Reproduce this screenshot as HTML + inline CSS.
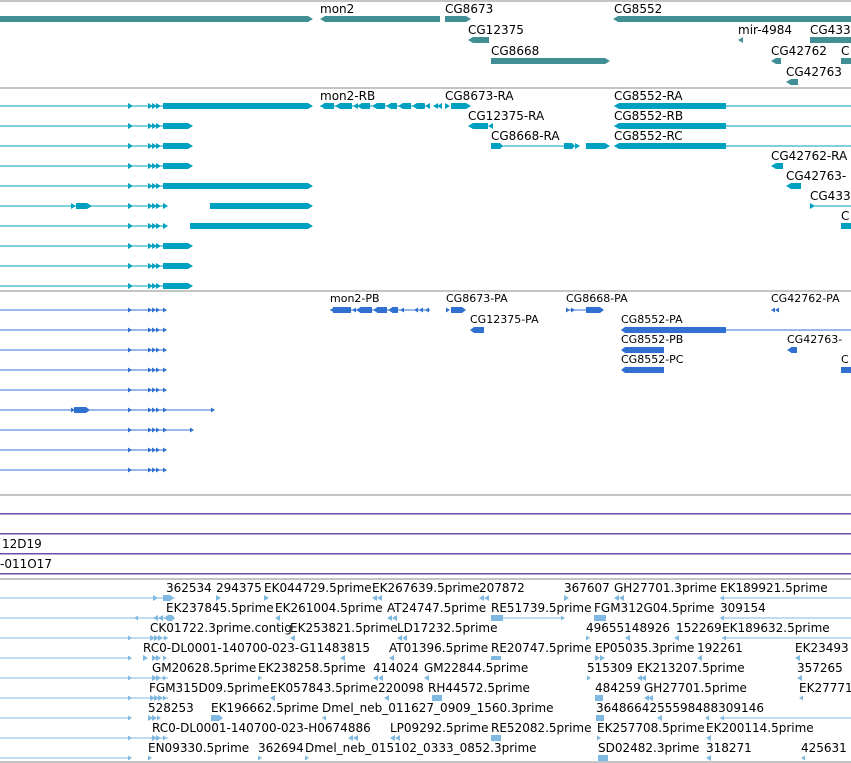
<!DOCTYPE html>
<html><head><meta charset="utf-8"><style>
html,body{margin:0;padding:0;background:#fff;width:851px;height:763px;overflow:hidden}
svg{display:block}
text{font-family:"DejaVu Sans","Liberation Sans",sans-serif;font-size:12px;fill:#000}
.p text{font-size:11px}
</style></head><body>
<svg width="851" height="763" viewBox="0 0 851 763" xmlns="http://www.w3.org/2000/svg">
<defs>
<polygon id="r" points="0,-3 5,0 0,3"/>
<polygon id="l" points="5,-3 0,0 5,3"/>
<polygon id="rs" points="0,-2.5 4,0 0,2.5"/>
<polygon id="ls" points="4,-2.5 0,0 4,2.5"/>
</defs>
<!-- separators -->
<g fill="#c4c4c4">
<rect x="0" y="0" width="851" height="2"/>
<rect x="0" y="87" width="851" height="2"/>
<rect x="0" y="290" width="851" height="2"/>
<rect x="0" y="494" width="851" height="2"/>
<rect x="0" y="578" width="851" height="2"/>
<rect x="0" y="761" width="851" height="2"/>
</g>
<g fill="#6a4fa8">
<rect x="0" y="513" width="851" height="1.5"/>
<rect x="0" y="533" width="851" height="1.5"/>
<rect x="0" y="553" width="851" height="1.5"/>
<rect x="0" y="573" width="851" height="1.5"/>
</g>
<text x="2" y="548">12D19</text>
<text x="0" y="568">-011O17</text>

<!-- genes -->
<g fill="#418f94">
<polygon points="0,16 308,16 313,19 308,22 0,22"/>
<polygon points="320,19 325,16 440,16 440,22 325,22"/>
<polygon points="445,16 466,16 471,19 466,22 445,22"/>
<polygon points="468,40 473,37 489,37 489,43 473,43"/>
<polygon points="491,58 605,58 610,61 605,64 491,64"/>
<polygon points="613,19 618,16 851,16 851,22 618,22"/>
<polygon points="738,40 743,37 743,43"/>
<rect x="810" y="37" width="41" height="6"/>
<polygon points="771,61 776,58 781,58 781,64 776,64"/>
<rect x="841" y="58" width="10" height="6"/>
<polygon points="786,82 791,79 798,79 798,85 791,85"/>
</g>
<text x="320" y="13">mon2</text>
<text x="445" y="13">CG8673</text>
<text x="614" y="13">CG8552</text>
<text x="468" y="34">CG12375</text>
<text x="738" y="34">mir-4984</text>
<text x="810" y="34">CG433</text>
<text x="491" y="55">CG8668</text>
<text x="771" y="55">CG42762</text>
<text x="841" y="55">C</text>
<text x="786" y="76">CG42763</text>

<!-- transcripts -->
<g fill="#00a0c0">
<!-- left rows -->
<g id="tr1"><rect x="0" y="105.5" width="163" height="1"/><use href="#r" x="128" y="106"/><use href="#r" x="148" y="106"/><use href="#r" x="152" y="106"/><use href="#r" x="156" y="106"/></g>
<use href="#tr1" y="20"/><use href="#tr1" y="40"/><use href="#tr1" y="60"/><use href="#tr1" y="80"/><use href="#tr1" y="100"/><use href="#tr1" y="120"/><use href="#tr1" y="140"/><use href="#tr1" y="160"/><use href="#tr1" y="180"/>
<polygon points="163,103 308,103 313,106 308,109 163,109"/>
<polygon points="163,123 188,123 193,126 188,129 163,129"/>
<polygon points="163,143 188,143 193,146 188,149 163,149"/>
<polygon points="163,163 188,163 193,166 188,169 163,169"/>
<polygon points="163,183 308,183 313,186 308,189 163,189"/>
<polygon points="76,203 87,203 92,206 87,209 76,209"/><use href="#r" x="71" y="206"/>
<use href="#r" x="163" y="206"/>
<polygon points="210,203 308,203 313,206 308,209 210,209"/>
<use href="#r" x="163" y="226"/>
<polygon points="190,223 308,223 313,226 308,229 190,229"/>
<polygon points="163,243 188,243 193,246 188,249 163,249"/>
<polygon points="163,263 188,263 193,266 188,269 163,269"/>
<polygon points="163,283 188,283 193,286 188,289 163,289"/>
<!-- mon2-RB -->
<rect x="320" y="105.5" width="105" height="1"/>
<rect x="324" y="103" width="10" height="6"/><use href="#l" x="320" y="106"/>
<rect x="340" y="103" width="12" height="6"/><use href="#l" x="335" y="106"/>
<use href="#l" x="353" y="106"/><use href="#l" x="357" y="106"/><rect x="362" y="103" width="8" height="6"/>
<use href="#l" x="372" y="106"/><rect x="377" y="103" width="8" height="6"/>
<use href="#l" x="386" y="106"/><rect x="391" y="103" width="6" height="6"/>
<use href="#l" x="398" y="106"/><rect x="403" y="103" width="8" height="6"/>
<use href="#l" x="412" y="106"/><rect x="417" y="103" width="7" height="6"/>
<use href="#l" x="420" y="106"/><use href="#l" x="425" y="106"/><use href="#l" x="433" y="106"/><use href="#l" x="437" y="106"/>
<use href="#r" x="445" y="106"/><polygon points="451,103 466,103 471,106 466,109 451,109"/>
<polygon points="468,126 473,123 488,123 488,129 473,129"/><use href="#l" x="488" y="126"/>
<polygon points="491,143 500,143 503,146 500,149 491,149"/><rect x="491" y="145.5" width="74" height="1"/>
<polygon points="564,143 572,143 575,146 572,149 564,149"/><use href="#r" x="575" y="146"/>
<polygon points="586,143 605,143 610,146 605,149 586,149"/>
<g id="cg"><rect x="614" y="105.5" width="237" height="1"/><polygon points="614,106 619,103 726,103 726,109 619,109"/></g>
<use href="#cg" y="20"/><use href="#cg" y="40"/>
<polygon points="771,166 776,163 783,163 783,169 776,169"/>
<polygon points="786,186 791,183 801,183 801,189 791,189"/>
<use href="#r" x="810" y="206"/><rect x="810" y="205.5" width="41" height="1"/>
<rect x="841" y="223" width="10" height="6"/>
</g>
<text x="320" y="100">mon2-RB</text>
<text x="445" y="100">CG8673-RA</text>
<text x="614" y="100">CG8552-RA</text>
<text x="468" y="120">CG12375-RA</text>
<text x="614" y="120">CG8552-RB</text>
<text x="491" y="140">CG8668-RA</text>
<text x="614" y="140">CG8552-RC</text>
<text x="771" y="160">CG42762-RA</text>
<text x="786" y="180">CG42763-</text>
<text x="810" y="200">CG433</text>
<text x="841" y="220">C</text>

<!-- proteins -->
<g fill="#3070d0">
<g id="pr1"><rect x="0" y="309.5" width="166" height="1"/><use href="#rs" x="128" y="310"/><use href="#rs" x="148" y="310"/><use href="#rs" x="152" y="310"/><use href="#rs" x="156" y="310"/><use href="#rs" x="163" y="310"/></g>
<use href="#pr1" y="20"/><use href="#pr1" y="40"/><use href="#pr1" y="60"/><use href="#pr1" y="80"/><use href="#pr1" y="100"/><use href="#pr1" y="120"/><use href="#pr1" y="140"/><use href="#pr1" y="160"/>
<rect x="166" y="409.5" width="47" height="1"/><use href="#rs" x="211" y="410"/>
<polygon points="74,407 86,407 90,410 86,413 74,413"/><use href="#rs" x="71" y="410"/>
<rect x="166" y="429.5" width="26" height="1"/><use href="#rs" x="190" y="430"/>
<rect x="330" y="309.5" width="100" height="1"/>
<rect x="333" y="307" width="18" height="6"/><use href="#ls" x="330" y="310"/>
<use href="#ls" x="352" y="310"/><use href="#ls" x="356" y="310"/><rect x="360" y="307" width="12" height="6"/>
<use href="#ls" x="373" y="310"/><rect x="377" y="307" width="10" height="6"/>
<use href="#ls" x="388" y="310"/><rect x="392" y="307" width="6" height="6"/>
<use href="#ls" x="400" y="310"/><use href="#ls" x="414" y="310"/><use href="#ls" x="419" y="310"/><use href="#ls" x="425" y="310"/>
<use href="#rs" x="446" y="310"/><polygon points="451,307 462,307 466,310 462,313 451,313"/>
<polygon points="470,330 474,327 484,327 484,333 474,333"/>
<use href="#rs" x="566" y="310"/><use href="#rs" x="571" y="310"/><rect x="566" y="309.5" width="20" height="1"/><polygon points="586,307 600,307 604,310 600,313 586,313"/>
<use href="#ls" x="771" y="310"/><use href="#ls" x="775" y="310"/>
<rect x="621" y="329.5" width="230" height="1"/><polygon points="621,330 625,327 726,327 726,333 625,333"/>
<polygon points="621,350 625,347 664,347 664,353 625,353"/>
<polygon points="621,370 625,367 664,367 664,373 625,373"/>
<use href="#ls" x="787" y="350"/><polygon points="791,347 797,347 797,353 791,353"/>
<rect x="841" y="367" width="10" height="6"/>
</g>
<g class="p">
<text x="330" y="302">mon2-PB</text>
<text x="446" y="302">CG8673-PA</text>
<text x="566" y="302">CG8668-PA</text>
<text x="771" y="302">CG42762-PA</text>
<text x="470" y="323">CG12375-PA</text>
<text x="621" y="323">CG8552-PA</text>
<text x="621" y="343">CG8552-PB</text>
<text x="787" y="343">CG42763-</text>
<text x="621" y="363">CG8552-PC</text>
<text x="841" y="363">C</text>
</g>

<!-- ESTs -->
<g fill="#7fb8e0">
<rect x="0" y="597.5" width="175" height="1"/><use href="#r" x="153" y="598"/><polygon points="163,595 170,595 174,598 170,601 163,601"/><use href="#r" x="216" y="598"/><use href="#r" x="264" y="598"/><use href="#l" x="372" y="598"/><use href="#l" x="377" y="598"/><use href="#l" x="479" y="598"/><use href="#l" x="484" y="598"/><use href="#r" x="564" y="598"/><use href="#l" x="614" y="598"/><use href="#l" x="619" y="598"/><use href="#ls" x="720" y="598"/><rect x="720" y="597.5" width="131" height="1"/>
<rect x="0" y="617.5" width="175" height="1"/><use href="#ls" x="134" y="618"/><use href="#l" x="153" y="618"/><use href="#l" x="158" y="618"/><polygon points="164,618 168,615 172,615 175,618 172,621 168,621"/><use href="#l" x="275" y="618"/><use href="#l" x="387" y="618"/><use href="#l" x="392" y="618"/><rect x="491" y="615" width="12" height="6"/><rect x="491" y="617.5" width="70" height="1"/><use href="#rs" x="561" y="618"/><rect x="594" y="615" width="12" height="6"/><use href="#ls" x="720" y="618"/><rect x="720" y="617.5" width="131" height="1"/>
<rect x="0" y="637.5" width="168" height="1"/><use href="#rs" x="128" y="638"/><use href="#r" x="150" y="638"/><use href="#r" x="154" y="638"/><use href="#r" x="158" y="638"/><use href="#rs" x="164" y="638"/><use href="#l" x="290" y="638"/><use href="#l" x="397" y="638"/><use href="#l" x="402" y="638"/><use href="#rs" x="586" y="638"/><use href="#l" x="625" y="638"/><use href="#l" x="674" y="638"/><use href="#ls" x="722" y="638"/><rect x="722" y="637.5" width="129" height="1"/>
<rect x="0" y="657.5" width="131" height="1"/><use href="#rs" x="128" y="658"/><use href="#r" x="143" y="658"/><use href="#r" x="152" y="658"/><use href="#r" x="156" y="658"/><use href="#rs" x="163" y="658"/><use href="#l" x="340" y="658"/><use href="#l" x="389" y="658"/><rect x="491" y="656" width="10" height="4"/><use href="#r" x="595" y="658"/><use href="#r" x="600" y="658"/><use href="#l" x="697" y="658"/><use href="#l" x="795" y="658"/>
<rect x="0" y="677.5" width="168" height="1"/><use href="#rs" x="128" y="678"/><use href="#r" x="152" y="678"/><use href="#r" x="156" y="678"/><use href="#rs" x="163" y="678"/><use href="#rs" x="258" y="678"/><use href="#l" x="373" y="678"/><use href="#l" x="378" y="678"/><use href="#l" x="424" y="678"/><use href="#rs" x="587" y="678"/><use href="#l" x="637" y="678"/><use href="#l" x="641" y="678"/><use href="#l" x="797" y="678"/>
<rect x="0" y="697.5" width="168" height="1"/><use href="#rs" x="128" y="698"/><use href="#r" x="150" y="698"/><use href="#r" x="154" y="698"/><use href="#r" x="158" y="698"/><use href="#rs" x="163" y="698"/><use href="#l" x="270" y="698"/><use href="#l" x="384" y="698"/><rect x="432" y="695" width="10" height="6"/><rect x="595" y="695" width="8" height="6"/><use href="#l" x="644" y="698"/><use href="#l" x="648" y="698"/><use href="#ls" x="799" y="698"/>
<rect x="0" y="717.5" width="131" height="1"/><use href="#rs" x="128" y="718"/><use href="#r" x="148" y="718"/><use href="#r" x="152" y="718"/><use href="#rs" x="157" y="718"/><polygon points="211,715 219,715 223,718 219,721 211,721"/><use href="#ls" x="322" y="718"/><rect x="596" y="715" width="8" height="6"/><use href="#l" x="657" y="718"/><use href="#ls" x="705" y="718"/><use href="#ls" x="720" y="718"/><rect x="720" y="717.5" width="131" height="1"/>
<rect x="0" y="737.5" width="168" height="1"/><use href="#rs" x="128" y="738"/><use href="#r" x="152" y="738"/><use href="#r" x="156" y="738"/><use href="#rs" x="163" y="738"/><use href="#l" x="348" y="738"/><use href="#l" x="353" y="738"/><use href="#l" x="390" y="738"/><use href="#l" x="395" y="738"/><rect x="491" y="735" width="10" height="6"/><use href="#rs" x="597" y="738"/><use href="#l" x="706" y="738"/>
<rect x="0" y="757.5" width="131" height="1"/><use href="#rs" x="128" y="758"/><use href="#rs" x="148" y="758"/><use href="#rs" x="258" y="758"/><use href="#rs" x="305" y="758"/><rect x="598" y="755" width="10" height="6"/><use href="#l" x="706" y="758"/><use href="#ls" x="801" y="758"/>
</g>
<text x="166" y="592">362534</text><text x="216" y="592">294375</text><text x="264" y="592">EK044729.5prime</text><text x="372" y="592">EK267639.5prime</text><text x="479" y="592">207872</text><text x="564" y="592">367607</text><text x="614" y="592">GH27701.3prime</text><text x="720" y="592">EK189921.5prime</text>
<text x="166" y="612">EK237845.5prime</text><text x="275" y="612">EK261004.5prime</text><text x="387" y="612">AT24747.5prime</text><text x="491" y="612">RE51739.5prime</text><text x="594" y="612">FGM312G04.5prime</text><text x="720" y="612">309154</text>
<text x="150" y="632">CK01722.3prime.contig</text><text x="290" y="632">EK253821.5prime</text><text x="397" y="632">LD17232.5prime</text><text x="586" y="632">49655148926</text><text x="676" y="632">152269</text><text x="722" y="632">EK189632.5prime</text>
<text x="143" y="652">RC0-DL0001-140700-023-G11483815</text><text x="389" y="652">AT01396.5prime</text><text x="491" y="652">RE20747.5prime</text><text x="595" y="652">EP05035.3prime</text><text x="697" y="652">192261</text><text x="795" y="652">EK23493</text>
<text x="152" y="672">GM20628.5prime</text><text x="258" y="672">EK238258.5prime</text><text x="373" y="672">414024</text><text x="424" y="672">GM22844.5prime</text><text x="587" y="672">515309</text><text x="637" y="672">EK213207.5prime</text><text x="797" y="672">357265</text>
<text x="149" y="692">FGM315D09.5prime</text><text x="270" y="692">EK057843.5prime</text><text x="378" y="692">220098</text><text x="428" y="692">RH44572.5prime</text><text x="595" y="692">484259</text><text x="644" y="692">GH27701.5prime</text><text x="799" y="692">EK27771</text>
<text x="148" y="712">528253</text><text x="211" y="712">EK196662.5prime</text><text x="322" y="712">Dmel_neb_011627_0909_1560.3prime</text><text x="596" y="712">3648664255598488309146</text>
<text x="152" y="732">RC0-DL0001-140700-023-H0674886</text><text x="390" y="732">LP09292.5prime</text><text x="491" y="732">RE52082.5prime</text><text x="597" y="732">EK257708.5prime</text><text x="706" y="732">EK200114.5prime</text>
<text x="148" y="752">EN09330.5prime</text><text x="258" y="752">362694</text><text x="305" y="752">Dmel_neb_015102_0333_0852.3prime</text><text x="598" y="752">SD02482.3prime</text><text x="706" y="752">318271</text><text x="801" y="752">425631</text>
</svg>
</body></html>
